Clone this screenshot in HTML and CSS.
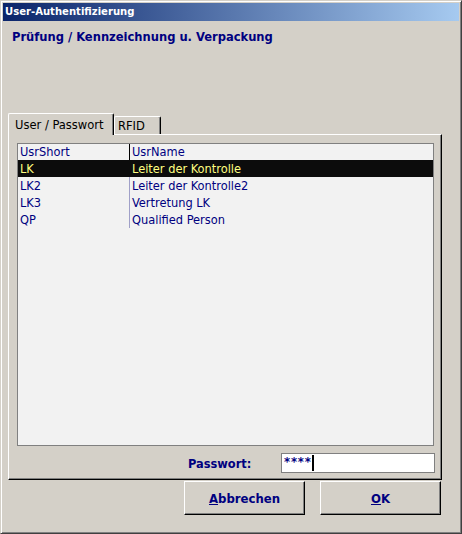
FILE: index.html
```html
<!DOCTYPE html>
<html>
<head>
<meta charset="utf-8">
<link rel="stylesheet" href="styles.css">
</head>
<body>
<div class="window">
  <div class="titlebar">User-Authentifizierung</div>
  <div class="content">
    <div class="heading">Prüfung / Kennzeichnung u. Verpackung</div>
    <div class="tabs">
      <div class="tab active">User / Passwort</div>
      <div class="tab">RFID</div>
    </div>
    <div class="panel">
      <div class="list">
        <div class="row head"><span class="c1">UsrShort</span><span class="c2">UsrName</span></div>
        <div class="row selected"><span class="c1">LK</span><span class="c2">Leiter der Kontrolle</span></div>
        <div class="row"><span class="c1">LK2</span><span class="c2">Leiter der Kontrolle2</span></div>
        <div class="row"><span class="c1">LK3</span><span class="c2">Vertretung LK</span></div>
        <div class="row"><span class="c1">QP</span><span class="c2">Qualified Person</span></div>
      </div>
      <div class="pwrow">
        <span class="pwlabel">Passwort:</span>
        <div class="pwinput"><span class="stars">****</span><span class="caret"></span></div>
      </div>
    </div>
    <div class="buttons">
      <div class="btn"><span><u>A</u>bbrechen</span></div>
      <div class="btn"><span><u>O</u>K</span></div>
    </div>
  </div>
</div>
</body>
</html>
```

FILE: styles.css
```css
html, body {
  margin: 0;
  padding: 0;
  background: #d4d0c8;
}
body {
  font-family: "DejaVu Sans Condensed", "DejaVu Sans", sans-serif;
}
.window {
  box-sizing: border-box;
  width: 462px;
  height: 534px;
  background: #d4d0c8;
  border: 1px solid;
  border-color: #d4d0c8 #404040 #404040 #d4d0c8;
  box-shadow: inset 1px 1px #fff, inset -1px -1px #808080;
  padding: 2px;
}
.titlebar {
  height: 18px;
  line-height: 18px;
  background: linear-gradient(to right, #0a246a, #a6caf0);
  color: #fff;
  font-weight: bold;
  font-size: 11.2px;
  padding-left: 2px;
}
.heading {
  padding: 8px 0 0 9px;
  line-height: 16px;
  font-size: 12.8px;
  font-weight: bold;
  color: #000080;
}
.tabs {
  display: flex;
  align-items: flex-end;
  height: 21px;
  margin: 68px 0 0 5px;
}
.tab {
  box-sizing: border-box;
  height: 18px;
  background: #d4d0c8;
  border-top: 1px solid #fff;
  border-left: 1px solid #fff;
  border-right: 1px solid #000;
  box-shadow: inset -1px 0 #808080;
  border-radius: 2px 2px 0 0;
  font-size: 12.8px;
  color: #000;
  padding: 2px 0 0 3px;
  width: 47px;
  line-height: 14px;
}
.tab.active {
  height: 22px;
  width: 106px;
  margin-bottom: -1px;
  position: relative;
  z-index: 1;
  padding: 4px 0 0 6px;
}
.panel {
  box-sizing: border-box;
  width: 434px;
  height: 346px;
  margin-left: 5px;
  border: 1px solid;
  border-color: #fff #000 #000 #fff;
  box-shadow: inset -1px -1px #808080;
}
.list {
  box-sizing: border-box;
  width: 417px;
  height: 303px;
  margin: 8px 0 0 8px;
  background: #f2f2f2;
  border: 1px solid #808080;
  font-size: 12.7px;
  color: #000080;
}
.row {
  display: flex;
  height: 17px;
  line-height: 17px;
}
.row.head {
  height: 16px;
  line-height: 16px;
}
.c1 {
  box-sizing: border-box;
  width: 112px;
  padding-left: 2px;
  border-right: 1px solid #a0a0c8;
}
.head .c1 {
  border-right-color: #000;
}
.c2 {
  padding-left: 2px;
}
.row.selected {
  background: #0c0c0c;
  color: #ffff80;
}
.row.selected .c1 {
  border-right-color: #0c0c0c;
}
.pwrow {
  display: flex;
  align-items: center;
  margin-top: 7px;
  padding-left: 179px;
}
.pwlabel {
  width: 93px;
  font-size: 12.7px;
  font-weight: bold;
  color: #000080;
}
.pwinput {
  box-sizing: border-box;
  width: 154px;
  height: 20px;
  background: #fff;
  border: 1px solid #808080;
  display: flex;
  align-items: flex-start;
  padding: 1px 0 0 2px;
}
.stars {
  font-size: 13px;
  line-height: 14px;
  font-weight: bold;
  color: #000080;
  letter-spacing: 0.8px;
}
.caret {
  display: inline-block;
  width: 2px;
  height: 16px;
  background: #000;
  margin-left: 0;
}
.buttons {
  display: flex;
  gap: 15px;
  margin: 1px 0 0 181px;
}
.btn {
  box-sizing: border-box;
  width: 121px;
  height: 34px;
  border: 1px solid;
  border-color: #fff #000 #000 #fff;
  box-shadow: inset -1px -1px #808080;
  display: flex;
  align-items: center;
  justify-content: center;
  font-size: 13px;
  font-weight: bold;
  color: #000080;
}
```
